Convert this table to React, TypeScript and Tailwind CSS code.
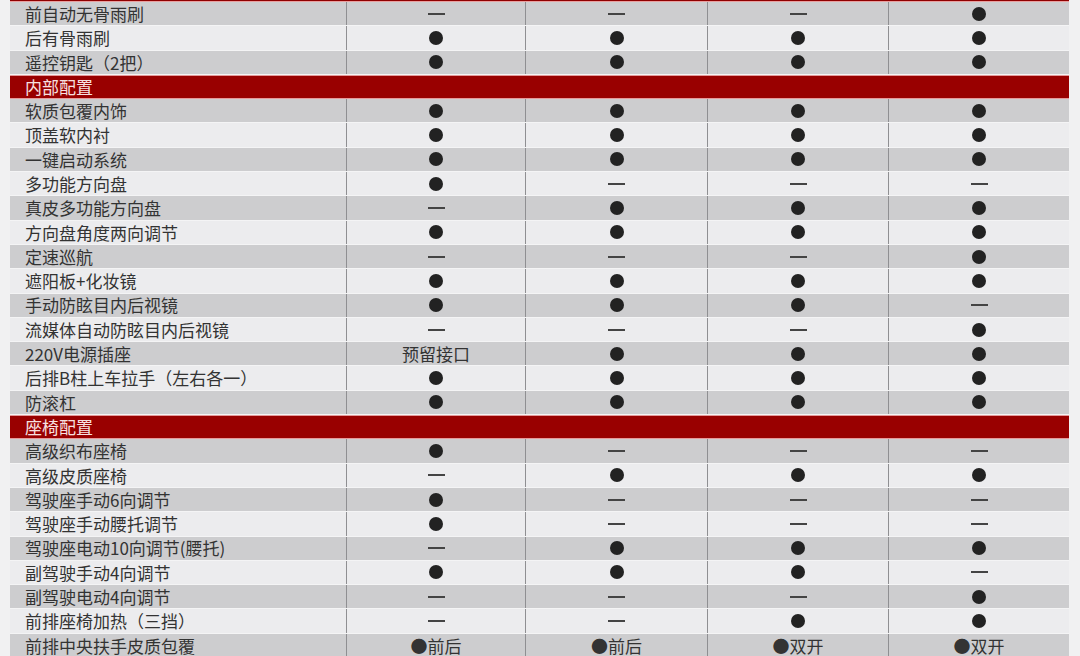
import React from 'react'

type Cell = 'y' | 'n' | string

type Row =
  | { kind: 'section'; title: string }
  | { kind: 'item'; name: string; cells: Cell[] }

const Y = 'y'
const N = 'n'

const rows: Row[] = [
  { kind: 'item', name: '前自动无骨雨刷', cells: [N, N, N, Y] },
  { kind: 'item', name: '后有骨雨刷', cells: [Y, Y, Y, Y] },
  { kind: 'item', name: '遥控钥匙（2把）', cells: [Y, Y, Y, Y] },
  { kind: 'section', title: '内部配置' },
  { kind: 'item', name: '软质包覆内饰', cells: [Y, Y, Y, Y] },
  { kind: 'item', name: '顶盖软内衬', cells: [Y, Y, Y, Y] },
  { kind: 'item', name: '一键启动系统', cells: [Y, Y, Y, Y] },
  { kind: 'item', name: '多功能方向盘', cells: [Y, N, N, N] },
  { kind: 'item', name: '真皮多功能方向盘', cells: [N, Y, Y, Y] },
  { kind: 'item', name: '方向盘角度两向调节', cells: [Y, Y, Y, Y] },
  { kind: 'item', name: '定速巡航', cells: [N, N, N, Y] },
  { kind: 'item', name: '遮阳板+化妆镜', cells: [Y, Y, Y, Y] },
  { kind: 'item', name: '手动防眩目内后视镜', cells: [Y, Y, Y, N] },
  { kind: 'item', name: '流媒体自动防眩目内后视镜', cells: [N, N, N, Y] },
  { kind: 'item', name: '220V电源插座', cells: ['预留接口', Y, Y, Y] },
  { kind: 'item', name: '后排B柱上车拉手（左右各一）', cells: [Y, Y, Y, Y] },
  { kind: 'item', name: '防滚杠', cells: [Y, Y, Y, Y] },
  { kind: 'section', title: '座椅配置' },
  { kind: 'item', name: '高级织布座椅', cells: [Y, N, N, N] },
  { kind: 'item', name: '高级皮质座椅', cells: [N, Y, Y, Y] },
  { kind: 'item', name: '驾驶座手动6向调节', cells: [Y, N, N, N] },
  { kind: 'item', name: '驾驶座手动腰托调节', cells: [Y, N, N, N] },
  { kind: 'item', name: '驾驶座电动10向调节(腰托)', cells: [N, Y, Y, Y] },
  { kind: 'item', name: '副驾驶手动4向调节', cells: [Y, Y, Y, N] },
  { kind: 'item', name: '副驾驶电动4向调节', cells: [N, N, N, Y] },
  { kind: 'item', name: '前排座椅加热（三挡）', cells: [N, N, Y, Y] },
  { kind: 'item', name: '前排中央扶手皮质包覆', cells: ['●前后', '●前后', '●双开', '●双开'] },
]

const colWidths = ['w-[179px]', 'w-[182px]', 'w-[181px]', 'w-[181px]']

function Mark({ value }: { value: Cell }) {
  if (value === Y) return <span className="block h-[14px] w-[14px] rounded-full bg-[#222]" />
  if (value === N) return <span className="block h-[2px] w-[17px] bg-[#444]" />
  return <span className="text-[17px] leading-none text-[#333]">{value}</span>
}

export default function App() {
  let stripe = 0

  return (
    <div
      className="h-[656px] w-[1080px] overflow-hidden bg-[#f1f1f2] pl-[10px]"
      style={{ fontFamily: '"Noto Sans CJK SC", "Noto Sans", sans-serif' }}
    >
      <div className="w-[1059px]">
        <div className="h-[2px] border-b border-[#e9a0a0] bg-[#8f0000]" />
        {rows.map((row, i) => {
          if (row.kind === 'section') {
            stripe = 0
            return (
              <div
                key={i}
                className="flex h-[24.3px] items-center border-y border-[#e69a9a] bg-[#990000] pl-[15px] text-[17px] text-[#f7e0e0]"
              >
                {row.title}
              </div>
            )
          }
          const gray = stripe % 2 === 0
          stripe++
          return (
            <div
              key={i}
              className={`flex h-[24.3px] border-b border-[#f4f4f5] ${gray ? 'bg-[#cdcdcf]' : 'bg-[#ececee]'}`}
            >
              <div className="flex w-[336px] items-center pl-[15px] text-[17px] text-[#333]">{row.name}</div>
              {row.cells.map((c, j) => (
                <div
                  key={j}
                  className={`flex ${colWidths[j]} items-center justify-center border-l border-[#8f8f92]`}
                >
                  <Mark value={c} />
                </div>
              ))}
            </div>
          )
        })}
      </div>
    </div>
  )
}
